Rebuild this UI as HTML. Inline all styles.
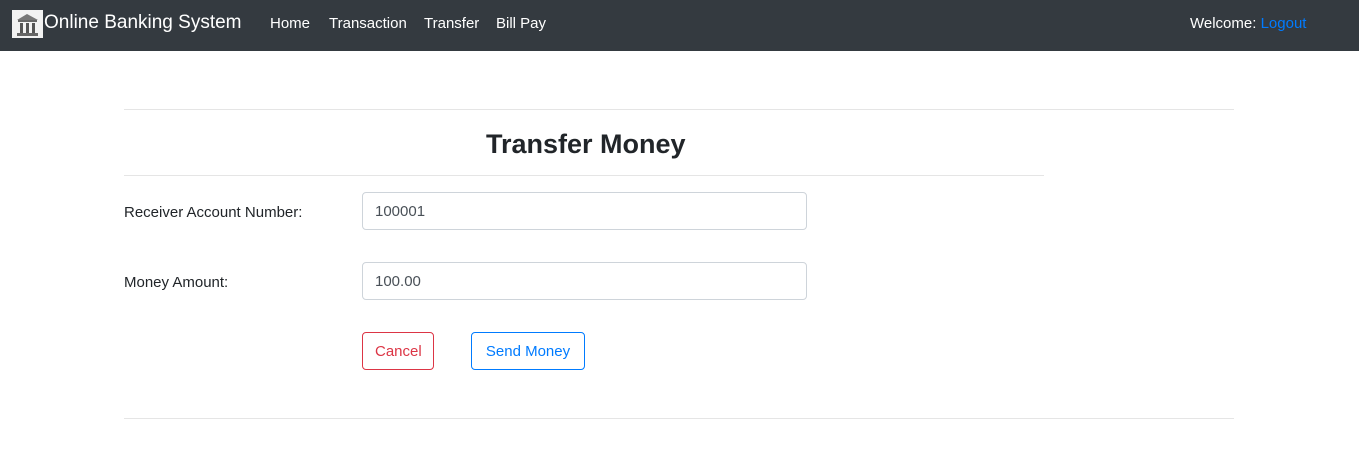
<!DOCTYPE html>
<html><head><style>
body{margin:0;width:1359px;height:451px;background:#fff;font-family:"Liberation Sans",sans-serif;color:#212529;position:relative;overflow:hidden}
.nav{position:absolute;left:0;top:0;width:1359px;height:51px;background:#343a40}
.t{position:absolute;white-space:nowrap}
.logo{position:absolute;left:12px;top:10px;width:31px;height:28px;background:#f2f2f2}
hr{position:absolute;margin:0;border:0;border-top:1px solid #e5e5e5}
.in{position:absolute;left:362px;width:445px;height:38px;border:1px solid #ced4da;border-radius:4px;box-sizing:border-box;font-size:15px;color:#495057;padding:11px 12px;line-height:16px}
.btn{position:absolute;top:332px;height:38px;box-sizing:border-box;border:1px solid;border-radius:4px;font-size:15px;padding:11px 12px;line-height:16px;text-align:center}
</style></head><body>
<div class="nav">
<div class="logo"><svg width="31" height="28"><path d="M15 4 L5 10 H26 Z" fill="#777"/><rect x="6" y="10" width="19" height="2" fill="#666"/><rect x="8" y="13" width="3" height="10" fill="#555"/><rect x="14" y="13" width="3" height="10" fill="#555"/><rect x="20" y="13" width="3" height="10" fill="#555"/><rect x="5" y="23" width="21" height="3" fill="#666"/></svg></div>
<div class="t" style="left:44px;top:12px;font-size:19px;color:#fff">Online Banking System</div>
<div class="t" style="left:270px;top:15px;font-size:15px;color:#fff">Home</div>
<div class="t" style="left:329px;top:15px;font-size:15px;color:#fff">Transaction</div>
<div class="t" style="left:424px;top:15px;font-size:15px;color:#fff">Transfer</div>
<div class="t" style="left:496px;top:15px;font-size:15px;color:#fff">Bill Pay</div>
<div class="t" style="left:1190px;top:15px;font-size:15px;color:#fff">Welcome: <span style="color:#007bff">Logout</span></div>
</div>
<hr style="left:124px;top:109px;width:1110px">
<div class="t" style="left:486px;top:129px;font-size:27px;font-weight:bold;color:#212529">Transfer Money</div>
<hr style="left:124px;top:175px;width:920px">
<div class="t" style="left:124px;top:204px;font-size:15px">Receiver Account Number:</div>
<div class="in" style="top:192px">100001</div>
<div class="t" style="left:124px;top:274px;font-size:15px">Money Amount:</div>
<div class="in" style="top:262px">100.00</div>
<div class="btn" style="left:362px;width:72px;color:#dc3545;border-color:#dc3545">Cancel</div>
<div class="btn" style="left:471px;width:114px;color:#007bff;border-color:#007bff">Send Money</div>
<hr style="left:124px;top:418px;width:1110px">
</body></html>
